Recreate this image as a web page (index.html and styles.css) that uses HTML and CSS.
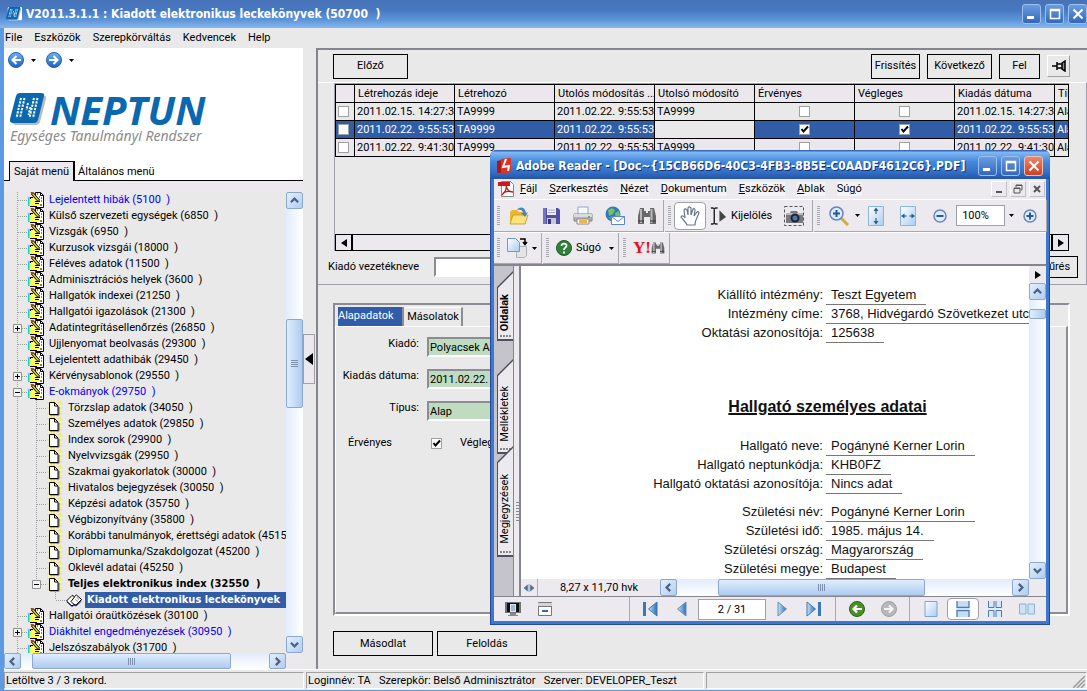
FILE: index.html
```html
<!DOCTYPE html>
<html lang="hu">
<head>
<meta charset="utf-8">
<title>Kiadott elektronikus leckekönyvek</title>
<link rel="stylesheet" href="styles.css">
</head>
<body>
<svg class="defs" aria-hidden="true">
  <defs>
    <linearGradient id="blueBall" x1="0" y1="0" x2="0" y2="1"><stop offset="0" stop-color="#6fb0f2"/><stop offset="1" stop-color="#1b62c4"/></linearGradient>
    <linearGradient id="paper" x1="0" y1="0" x2="1" y2="1"><stop offset="0" stop-color="#ffffff"/><stop offset="1" stop-color="#a9cdf2"/></linearGradient>
    <linearGradient id="navBlue" x1="0" y1="0" x2="1" y2="0"><stop offset="0" stop-color="#c8e4f8"/><stop offset="1" stop-color="#2e6cb0"/></linearGradient>
  </defs>
  <symbol id="mid" viewBox="0 0 24 16"><path d="M13.5 0V16M14 8.500H24" fill="none" stroke="#a0a0a0" stroke-dasharray="1 1"/></symbol>
  <symbol id="last" viewBox="0 0 24 16"><path d="M13.5 0V8M14 8.500H24" fill="none" stroke="#a0a0a0" stroke-dasharray="1 1"/></symbol>
  <symbol id="plus" viewBox="0 0 24 16"><path d="M13.5 0V16M18 8.500H24" fill="none" stroke="#a0a0a0" stroke-dasharray="1 1"/><path d="M9.500 4.500h8v8h-8z" fill="#f4f4f4" stroke="#909090"/><path d="M11 8.500h5M13.500 6v5" stroke="#000"/></symbol>
  <symbol id="minus" viewBox="0 0 24 16"><path d="M13.500 0V16M18 8.500H24" fill="none" stroke="#a0a0a0" stroke-dasharray="1 1"/><path d="M9.500 4.500h8v8h-8z" fill="#f4f4f4" stroke="#909090"/><path d="M11 8.500h5" stroke="#000"/></symbol>
  <symbol id="minusend" viewBox="0 0 24 16"><path d="M13.500 0V4M18 8.500H24" fill="none" stroke="#a0a0a0" stroke-dasharray="1 1"/><path d="M9.500 4.500h8v8h-8z" fill="#f4f4f4" stroke="#909090"/><path d="M11 8.500h5" stroke="#000"/></symbol>
  <symbol id="hand" viewBox="0 0 16 16">
    <path d="M7.500.5h5l3 3v12h-8z" fill="#fff" stroke="#000"/><path d="M12.500.5v3h3" fill="none" stroke="#000"/>
    <path d="M2 6h4l5 1v3l1 2-2 2-8 1z" fill="#ffff60"/><path d="M0 5h1.500v9H0z" fill="#00d8e0"/>
    <path d="M2 5.500h3M7 9.500h5M7 11.500h4M2 14.500h7M2.500 5v2" stroke="#000" fill="none"/>
    <path d="M4 1l7 8" stroke="#000" stroke-width="3"/><path d="M4.500 1.500l6 7" stroke="#f8e800" stroke-width="1.200"/><path d="M3 0l1.500 1.500" stroke="#d02020" stroke-width="1.500"/>
    <path d="M13 6h1M13 9h1M12 13h2M9 2h1M11 5h1" stroke="#000"/>
  </symbol>
  <symbol id="doc" viewBox="0 0 16 16">
    <path d="M0 2l3 2M4 0l1 2M14 1l-3 3M0 8h2M15 8h-3M0 14l3-2M15 14l-3-2M13 4l2 0M7 0v2" stroke="#ffee20" stroke-width="1.500"/>
    <path d="M2.500 2.500h5l3.500 3.500v8.500H2.500z" fill="#fff" stroke="#000"/><path d="M7.500 2.500v3.500H11" fill="none" stroke="#000"/>
    <path d="M3 15h9V7" fill="none" stroke="#000" stroke-width=".6"/>
  </symbol>
  <symbol id="book" viewBox="0 0 16 16"><path d="M.5 9L6 3.500l2.500 1 2-1.500 5 4.500L10 13l-2.500-.5L6 14z" fill="#fff" stroke="#000"/><path d="M1 10l5 4.500L8 13l2 1 5.500-5" fill="none" stroke="#1818b0"/><path d="M8.500 5L5 9.500l3 3" fill="none" stroke="#000"/><path d="M10.500 5.500l2.500 2M9.500 7.500l2.500 2" stroke="#888"/></symbol>
  <symbol id="up" viewBox="0 0 8 8"><path d="M.8 5.500L4 2.300l3.200 3.200" fill="none" stroke="#4d6185" stroke-width="2"/></symbol>
  <symbol id="down" viewBox="0 0 8 8"><path d="M.8 2.500L4 5.700l3.200-3.200" fill="none" stroke="#4d6185" stroke-width="2"/></symbol>
  <symbol id="lt" viewBox="0 0 8 8"><path d="M5.500.8L2.300 4l3.200 3.200" fill="none" stroke="#4d6185" stroke-width="2"/></symbol>
  <symbol id="rt" viewBox="0 0 8 8"><path d="M2.500.8L5.700 4 2.500 7.200" fill="none" stroke="#4d6185" stroke-width="2"/></symbol>
  <symbol id="caret" viewBox="0 0 5 3"><path d="M0 0h5L2.500 3z" fill="#000"/></symbol>
  <symbol id="wmin" viewBox="0 0 12 12"><path d="M1 8h7v3H1z" fill="#fff"/></symbol>
  <symbol id="wmax" viewBox="0 0 12 12"><path d="M1.500 1.500h9v9h-9zM1 2.500h10" fill="none" stroke="#fff" stroke-width="1.500"/></symbol>
  <symbol id="wx" viewBox="0 0 12 12"><path d="M1.500 1.500l9 9m0-9l-9 9" stroke="#fff" stroke-width="2"/></symbol>
  <symbol id="nlogo" viewBox="0 0 36 32">
    <path d="M9 3h26q2 1 1 3l-6 23q-1 3-4 3H5l-3-2z" fill="#b9bcc0"/>
    <path d="M10 0h21q4 0 3 3l-6 24q-1 3-4 3H3q-4 0-3-4L6 3q1-3 4-3z" fill="#0a68b0"/>
    <path d="M11 5l-4.500 20M14.500 5l-4.500 20M18 10l-1.500 7M20.500 14l-2 8M24 5l-4.500 20M27.500 5l-4.500 20" stroke="#fff" stroke-width="2" stroke-dasharray="2.200 1.200"/>
  </symbol>
  <symbol id="binoc" viewBox="0 0 20 20"><path d="M3 2h4v3h2v2h2V5h2V2h4l2 8v8h-6v-7H7v7H1v-8z" fill="#686868"/><path d="M4 3v14M14.500 3v14" stroke="#b8b8b8" stroke-width="2"/><path d="M1 15h6M13 15h6" stroke="#333"/></symbol>
</svg>

<div class="app">
  <header class="titlebar">
    <svg class="i16" viewBox="0 0 36 32"><rect x="4" width="32" height="30" rx="3" fill="#fff"/><use href="#nlogo" width="34" height="30"/></svg>
    <h1>V2011.3.1.1 : Kiadott elektronikus leckekönyvek (50700 &nbsp;)</h1>
    <div class="winbtns">
      <button aria-label="Kis méret"><svg><use href="#wmin"/></svg></button>
      <button aria-label="Teljes méret"><svg><use href="#wmax"/></svg></button>
      <button aria-label="Bezárás"><svg><use href="#wx"/></svg></button>
    </div>
  </header>

  <nav class="menubar">
    <button>File</button><button>Eszközök</button><button>Szerepkörváltás</button><button>Kedvencek</button><button>Help</button>
  </nav>

  <main class="main">
    <aside class="sidebar">
      <div class="brand">
        <div class="history">
          <button aria-label="Vissza"><svg class="i16" viewBox="0 0 16 16"><circle cx="8" cy="8" r="7.500" fill="url(#blueBall)" stroke="#2060b8"/><path d="M13 8H5M8.500 4L4.500 8l4 4" fill="none" stroke="#fff" stroke-width="2"/></svg></button>
          <svg class="caret"><use href="#caret"/></svg>
          <button aria-label="Előre"><svg class="i16" viewBox="0 0 16 16"><circle cx="8" cy="8" r="7.500" fill="url(#blueBall)" stroke="#2060b8"/><path d="M3 8h8M7.500 4l4 4-4 4" fill="none" stroke="#fff" stroke-width="2"/></svg></button>
          <svg class="caret"><use href="#caret"/></svg>
        </div>
        <div class="logo"><svg class="logo-mark"><use href="#nlogo"/></svg><span>NEPTUN</span></div>
        <p class="tagline">Egységes Tanulmányi Rendszer</p>
        <div class="sidetabs"><button class="on">Saját menü</button><button>Általános menü</button></div>
      </div>
      <div class="treebox">
        <ul class="tree">
          <li><div class="node blue"><svg class="br"><use href="#mid"/></svg><svg class="i16"><use href="#hand"/></svg><span>Lejelentett hibák (5100 &nbsp;)</span></div></li>
          <li><div class="node"><svg class="br"><use href="#mid"/></svg><svg class="i16"><use href="#hand"/></svg><span>Külső szervezeti egységek (6850 &nbsp;)</span></div></li>
          <li><div class="node"><svg class="br"><use href="#mid"/></svg><svg class="i16"><use href="#hand"/></svg><span>Vizsgák (6950 &nbsp;)</span></div></li>
          <li><div class="node"><svg class="br"><use href="#mid"/></svg><svg class="i16"><use href="#hand"/></svg><span>Kurzusok vizsgái (18000 &nbsp;)</span></div></li>
          <li><div class="node"><svg class="br"><use href="#mid"/></svg><svg class="i16"><use href="#hand"/></svg><span>Féléves adatok (11500 &nbsp;)</span></div></li>
          <li><div class="node"><svg class="br"><use href="#mid"/></svg><svg class="i16"><use href="#hand"/></svg><span>Adminisztrációs helyek (3600 &nbsp;)</span></div></li>
          <li><div class="node"><svg class="br"><use href="#mid"/></svg><svg class="i16"><use href="#hand"/></svg><span>Hallgatók indexei (21250 &nbsp;)</span></div></li>
          <li><div class="node"><svg class="br"><use href="#mid"/></svg><svg class="i16"><use href="#hand"/></svg><span>Hallgatói igazolások (21300 &nbsp;)</span></div></li>
          <li><div class="node"><svg class="br"><use href="#plus"/></svg><svg class="i16"><use href="#hand"/></svg><span>Adatintegrításellenőrzés (26850 &nbsp;)</span></div></li>
          <li><div class="node"><svg class="br"><use href="#mid"/></svg><svg class="i16"><use href="#hand"/></svg><span>Ujjlenyomat beolvasás (29300 &nbsp;)</span></div></li>
          <li><div class="node"><svg class="br"><use href="#mid"/></svg><svg class="i16"><use href="#hand"/></svg><span>Lejelentett adathibák (29450 &nbsp;)</span></div></li>
          <li><div class="node"><svg class="br"><use href="#plus"/></svg><svg class="i16"><use href="#hand"/></svg><span>Kérvénysablonok (29550 &nbsp;)</span></div></li>
          <li><div class="node blue"><svg class="br"><use href="#minus"/></svg><svg class="i16"><use href="#hand"/></svg><span>E-okmányok (29750 &nbsp;)</span></div>
            <ul class="lined">
              <li><div class="node"><svg class="br"><use href="#mid"/></svg><svg class="i16"><use href="#doc"/></svg><span>Törzslap adatok (34050 &nbsp;)</span></div></li>
              <li><div class="node"><svg class="br"><use href="#mid"/></svg><svg class="i16"><use href="#doc"/></svg><span>Személyes adatok (29850 &nbsp;)</span></div></li>
              <li><div class="node"><svg class="br"><use href="#mid"/></svg><svg class="i16"><use href="#doc"/></svg><span>Index sorok (29900 &nbsp;)</span></div></li>
              <li><div class="node"><svg class="br"><use href="#mid"/></svg><svg class="i16"><use href="#doc"/></svg><span>Nyelvvizsgák (29950 &nbsp;)</span></div></li>
              <li><div class="node"><svg class="br"><use href="#mid"/></svg><svg class="i16"><use href="#doc"/></svg><span>Szakmai gyakorlatok (30000 &nbsp;)</span></div></li>
              <li><div class="node"><svg class="br"><use href="#mid"/></svg><svg class="i16"><use href="#doc"/></svg><span>Hivatalos bejegyzések (30050 &nbsp;)</span></div></li>
              <li><div class="node"><svg class="br"><use href="#mid"/></svg><svg class="i16"><use href="#doc"/></svg><span>Képzési adatok (35750 &nbsp;)</span></div></li>
              <li><div class="node"><svg class="br"><use href="#mid"/></svg><svg class="i16"><use href="#doc"/></svg><span>Végbizonyítvány (35800 &nbsp;)</span></div></li>
              <li><div class="node"><svg class="br"><use href="#mid"/></svg><svg class="i16"><use href="#doc"/></svg><span>Korábbi tanulmányok, érettségi adatok (45150</span></div></li>
              <li><div class="node"><svg class="br"><use href="#mid"/></svg><svg class="i16"><use href="#doc"/></svg><span>Diplomamunka/Szakdolgozat (45200 &nbsp;)</span></div></li>
              <li><div class="node"><svg class="br"><use href="#mid"/></svg><svg class="i16"><use href="#doc"/></svg><span>Oklevél adatai (45250 &nbsp;)</span></div></li>
              <li><div class="node strong"><svg class="br"><use href="#minusend"/></svg><svg class="i16"><use href="#doc"/></svg><span>Teljes elektronikus index (32550 &nbsp;)</span></div>
                <ul>
                  <li><div class="node strong picked"><svg class="br"><use href="#last"/></svg><svg class="i16"><use href="#book"/></svg><span>Kiadott elektronikus leckekönyvek</span></div></li>
                </ul>
              </li>
            </ul>
          </li>
          <li><div class="node"><svg class="br"><use href="#mid"/></svg><svg class="i16"><use href="#hand"/></svg><span>Hallgatói óraütközések (30100 &nbsp;)</span></div></li>
          <li><div class="node blue"><svg class="br"><use href="#plus"/></svg><svg class="i16"><use href="#hand"/></svg><span>Diákhitel engedményezések (30950 &nbsp;)</span></div></li>
          <li><div class="node"><svg class="br"><use href="#mid"/></svg><svg class="i16"><use href="#hand"/></svg><span>Jelszószabályok (31700 &nbsp;)</span></div></li>
        </ul>
        <div class="vscroll">
          <button class="sb" aria-label="Fel"><svg><use href="#up"/></svg></button>
          <i class="g111"></i><div class="thumb g88"><b class="ridges"></b></div><i class="g231"></i>
          <button class="sb" aria-label="Le"><svg><use href="#down"/></svg></button>
        </div>
        <div class="hscroll">
          <button class="sb" aria-label="Balra"><svg><use href="#lt"/></svg></button>
          <i class="g11"></i><div class="thumb g200"><b class="ridges side"></b></div><i class="g39"></i>
          <button class="sb" aria-label="Jobbra"><svg><use href="#rt"/></svg></button>
        </div>
      </div>
    </aside>

    <div class="splitter"><button aria-label="Panel elrejtése"><svg viewBox="0 0 8 12"><path d="M0 6l8-6v12z"/></svg></button></div>

    <section class="content">
      <div class="upper">
        <div class="actions">
          <button class="btn w75">Előző</button>
          <span class="grow"></span>
          <button class="btn w49">Frissítés</button>
          <button class="btn w65">Következő</button>
          <button class="btn w41">Fel</button>
          <button class="pin" aria-label="Rögzítés"><svg viewBox="0 0 16 12"><path d="M1 6h5M6 2v8M6 4h5M6 8h5M11 3l3-2v10l-3-2z" fill="#888" stroke="#000" stroke-width="1.500"/></svg></button>
        </div>
        <div class="gridwrap">
          <div class="gridbox">
            <table class="grid">
              <colgroup><col class="c19"><col class="c100"><col class="c100"><col class="c100"><col class="c100"><col class="c100"><col class="c100"><col class="c100"><col></colgroup>
              <thead><tr><th></th><th>Létrehozás ideje</th><th>Létrehozó</th><th>Utolós módosítás ...</th><th>Utolsó módosító</th><th>Érvényes</th><th>Végleges</th><th>Kiadás dátuma</th><th>Típus</th></tr></thead>
              <tbody>
                <tr><td><input type="checkbox" aria-label="Sor"></td><td>2011.02.15. 14:27:39</td><td>TA9999</td><td>2011.02.22. 9:55:53</td><td>TA9999</td><td class="ck"><input type="checkbox" aria-label="Érvényes"></td><td class="ck"><input type="checkbox" aria-label="Végleges"></td><td>2011.02.15. 14:27:39</td><td>Alap</td></tr>
                <tr class="sel"><td><input type="checkbox" aria-label="Sor"></td><td>2011.02.22. 9:55:53</td><td>TA9999</td><td>2011.02.22. 9:55:53</td><td class="plain"></td><td class="ck"><input type="checkbox" checked aria-label="Érvényes"></td><td class="ck"><input type="checkbox" checked aria-label="Végleges"></td><td>2011.02.22. 9:55:53</td><td>Alap</td></tr>
                <tr class="alt"><td><input type="checkbox" aria-label="Sor"></td><td>2011.02.22. 9:41:30</td><td>TA9999</td><td>2011.02.22. 9:55:53</td><td>TA9999</td><td class="ck"><input type="checkbox" aria-label="Érvényes"></td><td class="ck"><input type="checkbox" aria-label="Végleges"></td><td>2011.02.22. 9:41:30</td><td>Alap</td></tr>
              </tbody>
            </table>
            <div class="flatscroll">
              <button aria-label="Balra"><svg viewBox="0 0 6 8"><path d="M6 0v8L0 4z"/></svg></button>
              <button aria-label="Jobbra"><svg viewBox="0 0 6 8"><path d="M0 0v8l6-4z"/></svg></button>
            </div>
          </div>
          <div class="filter">
            <label for="vez">Kiadó vezetékneve</label><input id="vez" type="text"><span class="grow"></span><button class="btn w49">Szűrés</button>
          </div>
        </div>
      </div>

      <div class="panel">
        <div class="tabs"><button class="on">Alapadatok</button><button>Másolatok</button></div>
        <form class="form">
          <label for="kiado">Kiadó:</label><input id="kiado" type="text" value="Polyacsek András">
          <label for="datum">Kiadás dátuma:</label><input id="datum" type="text" value="2011.02.22.">
          <label for="tipus">Típus:</label><input id="tipus" type="text" value="Alap">
          <div class="flags"><label for="erv">Érvényes</label><input id="erv" type="checkbox" checked><label for="veg">Végleges</label><input id="veg" type="checkbox" checked></div>
        </form>
      </div>

      <div class="footerbtns"><button class="btn w100">Másodlat</button><button class="btn w100">Feloldás</button></div>
    </section>
  </main>

  <footer class="status">
    <span class="s1">Letöltve 3 / 3 rekord.</span>
    <span class="s2">Loginnév: TA &nbsp; Szerepkör: Belső Adminisztrátor &nbsp; Szerver: DEVELOPER_Teszt</span>
    <span class="s3"><svg viewBox="0 0 12 12"><path d="M0 12L12 0M4 12l8-8M8 12l4-4" stroke="#999" stroke-width="1.500"/></svg></span>
  </footer>
</div>

<section class="reader">
  <header class="rtitle">
    <svg class="i16" viewBox="0 0 16 16"><path d="M1 3l5-1v13H1z" fill="#b81414"/><path d="M5 1l10-1v14L5 16z" fill="#e03020"/><path d="M10 1L7 9l6-1-1 5" stroke="#fff" stroke-width="2" fill="none"/></svg>
    <h2>Adobe Reader - [Doc~{15CB66D6-40C3-4FB3-8B5E-C0AADF4612C6}.PDF]</h2>
    <div class="winbtns">
      <button aria-label="Kis méret"><svg><use href="#wmin"/></svg></button>
      <button aria-label="Teljes méret"><svg><use href="#wmax"/></svg></button>
      <button class="red" aria-label="Bezárás"><svg><use href="#wx"/></svg></button>
    </div>
  </header>
  <nav class="rmenu">
    <svg class="i16" viewBox="0 0 16 16"><path d="M3.500.5h9l3 3v12h-12z" fill="#fff" stroke="#888"/><path d="M0 1h12v4H0z" fill="#d01818"/><path d="M8 5c1 3-1 6-4 9M8 5c1 4 3 6 7 6M5 12c3-2 6-2 9-1" stroke="#c01818" stroke-width="1.300" fill="none"/></svg>
    <button><u>F</u>ájl</button><button><u>S</u>zerkesztés</button><button><u>N</u>ézet</button><button><u>D</u>okumentum</button><button><u>E</u>szközök</button><button><u>A</u>blak</button><button>Sú<u>g</u>ó</button>
    <span class="grow"></span>
    <div class="mdi">
      <button aria-label="Kis méret"><svg viewBox="0 0 10 10"><path d="M2 8h6" stroke="#555" stroke-width="2"/></svg></button>
      <button aria-label="Előző méret"><svg viewBox="0 0 10 10"><path d="M3 3V1h6v5H8M1 4h6v5H1zM1 4.500h6M3 1.500h6" fill="none" stroke="#555"/></svg></button>
      <button aria-label="Bezárás"><svg viewBox="0 0 10 10"><path d="M2 2l6 6m0-6L2 8" stroke="#555" stroke-width="2"/></svg></button>
    </div>
  </nav>

  <div class="tools">
    <div class="group">
      <i class="grip"></i>
      <button class="tb" aria-label="Megnyitás"><svg viewBox="0 0 20 20"><path d="M1 6l2-2h5l2 2h7v12H1z" fill="#e8b830"/><path d="M1 18l3-9h15l-3 9z" fill="#fbe27a" stroke="#c89820" stroke-width=".8"/><path d="M8 4c3-4 8-3 9 3l2-1-3 5-4-4h2c0-3-3-4-6-3z" fill="#4a82c8"/></svg></button>
      <button class="tb" aria-label="Mentés"><svg viewBox="0 0 20 20"><path d="M2 2h15l2 2v14H2z" fill="#5050a8"/><path d="M2 2h3v16H2z" fill="#7474c8"/><path d="M6 2h9v7H6z" fill="#eef"/><path d="M7 4h7M7 6.500h7" stroke="#a8a8cc"/><path d="M6 12h9v6H6z" fill="#c8c8d8"/><path d="M7 13h3v5H7z" fill="#383878"/></svg></button>
      <button class="tb" aria-label="Nyomtatás"><svg viewBox="0 0 20 20"><path d="M5 1h10v8H5z" fill="#f4f8ff" stroke="#90a8c8"/><path d="M1 8h18v7H1z" fill="#b4b4ba" stroke="#808088"/><path d="M1 8h18v3H1z" fill="#dcdce0"/><path d="M4 13h12v5H4z" fill="#fff" stroke="#888"/><path d="M6 14h8v3H6z" fill="#f0b840"/><circle cx="16" cy="11" r="1" fill="#4a4"/></svg></button>
      <button class="tb" aria-label="E-mail"><svg viewBox="0 0 20 20"><circle cx="8" cy="8" r="7.500" fill="#2e78c8"/><path d="M3 4l4-2 3 2-2 4-4 2zM10 7l4-2 1 4-4 4zM3 11l4 1 1 3z" fill="#78c058"/><path d="M6.500 10.500h13v8h-13z" fill="#fff" stroke="#5888c8"/><path d="M6.500 10.500l6.500 5 6.500-5" fill="none" stroke="#5888c8"/></svg></button>
      <button class="tb" aria-label="Keresés"><svg><use href="#binoc"/></svg></button>
    </div>
    <div class="group">
      <i class="grip"></i>
      <button class="tb pressed" aria-label="Kéz eszköz"><svg viewBox="0 0 20 20"><path d="M7 19c-1-3-4-5-6-8 1-2 3-1 4 1L4 4c1-2 2-1 3 0l1 5V2c1-2 2-1 3 0v7l2-6c1-1 2 0 2 1l-1 6 3-4c1-1 2 0 2 1l-3 7c-1 2-1 3-1 5z" fill="#fff" stroke="#68788c" stroke-width="1.200"/></svg></button>
      <button class="tool"><svg class="seltool" viewBox="0 0 18 18"><path d="M1 .5h2l1.500 1L6 .5h2M4.500 1v16M1 17.500h2l1.500-1 1.500 1h2" fill="none" stroke="#222" stroke-width="1.500"/><path d="M10 3l7 7-7 5z" fill="#444"/></svg>Kijelölés</button>
      <button class="tb cam" aria-label="Pillanatkép"><svg viewBox="0 0 20 20"><path d="M.5.5h19v19H.5z" fill="none" stroke="#555" stroke-dasharray="3 2"/><path d="M2 7h4l1-2h6l1 2h5v10H2z" fill="#767a80"/><path d="M2 7h17v2H2z" fill="#b4b8bc"/><circle cx="11" cy="12" r="4.500" fill="#223"/><circle cx="11" cy="12" r="2.500" fill="#4a78a8"/></svg></button>
    </div>
    <div class="group last">
      <i class="grip"></i>
      <button class="tb" aria-label="Nagyítás eszköz"><svg viewBox="0 0 20 20"><path d="M12 12l7 7" stroke="#d8a838" stroke-width="3"/><circle cx="7.500" cy="7.500" r="6.500" fill="#dcecfc" stroke="#6a86b8" stroke-width="1.500"/><path d="M4 7.500h7M7.500 4v7" stroke="#2458a0" stroke-width="2"/></svg></button>
      <svg class="caret"><use href="#caret"/></svg>
      <button class="tb" aria-label="Teljes oldal"><svg viewBox="0 0 20 20"><path d="M2.500.5h15v19h-15z" fill="url(#paper)" stroke="#8cb4e0"/><path d="M10 8V4M10 12v4" stroke="#246"/><path d="M7.500 5L10 1.500 12.500 5zM7.500 15l2.500 3.500 2.500-3.500z" fill="#246090"/></svg></button>
      <button class="tb" aria-label="Oldalszélesség"><svg viewBox="0 0 20 20"><path d="M2.500.5h15v19h-15z" fill="url(#paper)" stroke="#8cb4e0"/><path d="M8.500 10H5M11.500 10H15" stroke="#246"/><path d="M6.500 7.500L3 10l3.500 2.500zM13.500 7.500L17 10l-3.500 2.500z" fill="#246090"/></svg></button>
      <button class="tb" aria-label="Kicsinyítés"><svg viewBox="0 0 20 20"><circle cx="10" cy="10" r="6" fill="#dcecfc" stroke="#6a86b8" stroke-width="1.500"/><path d="M6.500 10h7" stroke="#2458a0" stroke-width="2"/></svg></button>
      <input class="zoom" type="text" value="100%" aria-label="Nagyítás">
      <svg class="caret"><use href="#caret"/></svg>
      <button class="tb" aria-label="Nagyítás"><svg viewBox="0 0 20 20"><circle cx="10" cy="10" r="6" fill="#dcecfc" stroke="#6a86b8" stroke-width="1.500"/><path d="M6.500 10h7M10 6.500v7" stroke="#2458a0" stroke-width="2"/></svg></button>
    </div>
  </div>
  <div class="tools second">
    <div class="group">
      <i class="grip"></i>
      <button class="tool"><svg class="wide" viewBox="0 0 21 20"><path d="M9.500 8.500h10v9l-2 2h-8z" fill="#e4e4e4" stroke="#b0b0b0"/><path d="M.5.500h8l4 4v9H.5z" fill="url(#paper)" stroke="#7098d0"/><path d="M13 1h5v5M16 4l2 2.500L20 4" fill="none" stroke="#000" stroke-width="1.500"/></svg><svg class="caret"><use href="#caret"/></svg></button>
    </div>
    <div class="group">
      <i class="grip"></i>
      <button class="tool help"><svg class="i16" viewBox="0 0 16 16"><circle cx="8" cy="8" r="7.500" fill="#2f8038" stroke="#1c5c28"/><path d="M5.500 6c0-3.500 5.500-3 5 0-.3 1.500-2.500 1.500-2.500 4M8 11.500v2" fill="none" stroke="#fff" stroke-width="1.800"/></svg>Súgó<svg class="caret"><use href="#caret"/></svg></button>
    </div>
    <div class="group">
      <i class="grip"></i>
      <button class="tool yahoo"><b>Y!</b><svg class="i14"><use href="#binoc"/></svg></button>
    </div>
  </div>

  <div class="rbody">
    <div class="rtabs">
      <button class="t1"><span>Oldalak</span></button>
      <button class="t2"><span>Mellékletek</span></button>
      <button class="t3"><span>Megjegyzések</span></button>
    </div>
    <div class="rsplit"></div>
    <div class="view">
      <div class="page">
        <article class="sheet">
          <div class="f"><span>Kiállító intézmény:</span><b>Teszt Egyetem</b></div>
          <div class="f"><span>Intézmény címe:</span><b>3768, Hidvégardó Szövetkezet utca</b></div>
          <div class="f"><span>Oktatási azonosítója:</span><b>125638</b></div>
          <h3>Hallgató személyes adatai</h3>
          <div class="f"><span>Hallgató neve:</span><b>Pogányné Kerner Lorin</b></div>
          <div class="f"><span>Hallgató neptunkódja:</span><b>KHB0FZ</b></div>
          <div class="f"><span>Hallgató oktatási azonosítója:</span><b>Nincs adat</b></div>
          <div class="f gap"><span>Születési név:</span><b>Pogányné Kerner Lorin</b></div>
          <div class="f"><span>Születési idő:</span><b>1985. május 14.</b></div>
          <div class="f"><span>Születési ország:</span><b>Magyarország</b></div>
          <div class="f"><span>Születési megye:</span><b>Budapest</b></div>
        </article>
      </div>
      <div class="vscroll">
        <button class="flyout" aria-label="Menü"><svg viewBox="0 0 6 8"><path d="M0 0v8l6-4z"/></svg></button>
        <button class="sb" aria-label="Fel"><svg><use href="#up"/></svg></button>
        <i class="g9"></i><div class="thumb g8"></div><i class="g246"></i>
        <button class="sb" aria-label="Le"><svg><use href="#down"/></svg></button>
      </div>
      <div class="viewfoot">
        <button class="sizer" aria-label="Méretezés"><svg viewBox="0 0 10 8"><path d="M5 0v8M3.500 1v6L0 4zM6.500 1v6L10 4z" fill="#46709c" stroke="#46709c" stroke-width=".6"/></svg></button>
        <span class="dims">8,27 x 11,70 hvk</span>
        <div class="hscroll">
          <button class="sb" aria-label="Balra"><svg><use href="#lt"/></svg></button>
          <i class="g41"></i><div class="thumb g208"><b class="ridges side"></b></div><i class="g88"></i>
          <button class="sb" aria-label="Jobbra"><svg><use href="#rt"/></svg></button>
        </div>
      </div>
    </div>
  </div>

  <div class="rbar">
    <div class="seg seg1">
      <button class="nb" aria-label="Teljes képernyő"><svg viewBox="0 0 16 16"><path d="M0 1h16v11H0z" fill="#707478"/><path d="M2 2h12v9H2z" fill="#111"/><path d="M5 3h6v8H5z" fill="#d8e8f8"/><path d="M6 5h4M6 7h4M6 9h4" stroke="#789"/><path d="M5 12h6v2H5zM3 14h10v1H3z" fill="#888"/></svg></button>
      <button class="nb" aria-label="Eszköztárak"><svg viewBox="0 0 16 16"><path d="M1.500 1.500h13v13h-13z" fill="#fff" stroke="#777"/><path d="M1 2h14v3H1z" fill="#d4d4d8"/><path d="M1 5.500h14" stroke="#777"/><path d="M5 10h6" stroke="#3468a8" stroke-width="2"/></svg></button>
    </div>
    <div class="seg seg2">
      <button class="nb" aria-label="Első oldal"><svg viewBox="0 0 16 16"><path d="M1 1h3v14H1z" fill="#3c78b8"/><path d="M15 1v14L6.500 8z" fill="url(#navBlue)" stroke="#3c78b8"/></svg></button>
      <button class="nb" aria-label="Előző oldal"><svg viewBox="0 0 16 16"><path d="M12 1v14L3.500 8z" fill="url(#navBlue)" stroke="#5c90c4"/></svg></button>
      <input type="text" value="2 / 31" aria-label="Oldal">
      <button class="nb" aria-label="Következő oldal"><svg viewBox="0 0 16 16"><path d="M4 1v14L12.500 8z" fill="url(#navBlue)" stroke="#5c90c4"/></svg></button>
      <button class="nb" aria-label="Utolsó oldal"><svg viewBox="0 0 16 16"><path d="M12 1h3v14h-3z" fill="#3c78b8"/><path d="M1 1v14L9.500 8z" fill="url(#navBlue)" stroke="#3c78b8"/></svg></button>
    </div>
    <div class="seg seg3">
      <button class="nb" aria-label="Előző nézet"><svg viewBox="0 0 16 16"><circle cx="8" cy="8" r="7.500" fill="#4a9028" stroke="#2c6410"/><path d="M13 8H5M8 4.500L4.500 8 8 11.500" fill="none" stroke="#fff" stroke-width="2.200"/></svg></button>
      <button class="nb" aria-label="Következő nézet"><svg viewBox="0 0 16 16"><circle cx="8" cy="8" r="7.500" fill="#b8b8b8" stroke="#a0a0a0"/><path d="M3 8h8M8 4.500L11.500 8 8 11.500" fill="none" stroke="#f4f4f4" stroke-width="2.200"/></svg></button>
    </div>
    <div class="seg seg4">
      <button class="nb" aria-label="Egy oldal"><svg viewBox="0 0 16 16"><path d="M2 .5h12v15H2z" fill="url(#paper)" stroke="#7ca4cc"/></svg></button>
      <button class="nb pressed" aria-label="Folyamatos"><svg viewBox="0 0 16 16"><path d="M2 0h12v6.500H2zM2 9h12v7H2z" fill="#c4dcf4"/><path d="M2 0v6.500h12V0M2 16V9.500h12V16" fill="none" stroke="#4a7cb4" stroke-width="1.300"/></svg></button>
      <button class="nb" aria-label="Folyamatos páros"><svg viewBox="0 0 16 16"><path d="M1.500 0v6.500H7V0M9 0v6.500h5.500V0M1.500 16V9.500H7V16M9 16V9.500h5.500V16" fill="#d8e8f8" stroke="#4a7cb4"/></svg></button>
      <button class="nb" aria-label="Páros oldal"><svg viewBox="0 0 16 16"><path d="M.5 3h6.500v10H.5zM9 3h6.500v10H9z" fill="#cce4f4" stroke="#8cb0d0"/></svg></button>
    </div>
  </div>
</section>
</body>
</html>
```
FILE: styles.css
```css
* { box-sizing: border-box; }
body {
  margin: 0;
  font: 11px/16px Roboto, "Liberation Sans", Arial, sans-serif;
  color: #000;
  background: #e9e9e9;
  overflow: hidden;
}
button, input { font: inherit; color: inherit; margin: 0; }
button { padding: 0; border: 0; background: none; white-space: nowrap; }
svg { display: block; flex: none; }
ul { list-style: none; margin: 0; padding: 0; }
h1, h2, h3, p { margin: 0; }
.defs { position: absolute; width: 0; height: 0; }
.i16 { width: 16px; height: 16px; }
.i14 { width: 14px; height: 14px; }
.grow { flex: 1; }
.caret { width: 5px; height: 3px; }

.app {
  display: flex;
  flex-direction: column;
  height: 100vh;
  border-left: 4px solid #5c9ae4;
  border-bottom: 1px solid #5c9ae4;
}
.titlebar {
  flex: none;
  display: flex;
  align-items: center;
  gap: 4px;
  height: 28px;
  margin-left: -4px;
  padding: 0 0 0 6px;
  background: linear-gradient(#4872b8 0%, #4678c0 35%, #5c94d8 70%, #86b8f0 100%);
  color: #fff;
}
.titlebar h1 { flex: 1; font: bold 12px/16px "DejaVu Sans Condensed", "DejaVu Sans", sans-serif; white-space: nowrap; }
.winbtns { display: flex; gap: 4px; }
.winbtns button {
  width: 19px;
  height: 20px;
  display: grid;
  place-items: center;
  border: 1px solid #9cc0f0;
  border-radius: 3px;
  background: linear-gradient(#6a9ce0, #3468b8);
}
.winbtns svg { width: 12px; height: 12px; }
.winbtns .red { background: linear-gradient(#e88870, #d04020); border-color: #f0c0b0; }

.menubar { flex: none; display: flex; gap: 12px; height: 20px; padding-left: 1px; align-items: center; background: #e9e9e9; }

.main { flex: 1; display: flex; min-height: 0; border-bottom: 1px solid #fff; }
.sidebar { flex: none; width: 299px; display: flex; flex-direction: column; min-height: 0; background: #ebe8ee; }
.brand { flex: none; background: #fff; }
.history { display: flex; align-items: center; gap: 7px; padding: 4px 4px 0; }
.history .caret { margin-right: 3px; }
.logo { display: flex; gap: 4px; align-items: flex-start; padding: 25px 6px 0; height: 60px; }
.logo-mark { width: 36px; height: 32px; }
.logo span { font: italic bold 40px/34px "Open Sans", sans-serif; color: #0a68b0; }
.tagline { padding: 0 6px; font: italic 14px/16px "Noto Sans", sans-serif; color: #8c8c8c; white-space: nowrap; }
.sidetabs { display: flex; align-items: flex-end; margin-top: 17px; padding-left: 5px; background: linear-gradient(#000, #000) 0 100% / 100% 1px no-repeat; }
.sidetabs button { height: 19px; padding: 0 4px; }
.sidetabs .on { height: 20px; border: 1px solid #000; border-bottom: 0; background: #ebe8ee; box-shadow: 1px 0 #000; }

.treebox {
  flex: 1;
  min-height: 0;
  display: grid;
  grid-template: minmax(0, 1fr) 16px / minmax(0, 1fr) 17px;
  margin-top: 11px;
}
.tree { overflow: hidden; background: #e9e9e9; }
.node { display: flex; height: 16px; align-items: center; white-space: nowrap; }
.node span { padding: 0 1px 0 4px; margin-left: 1px; }
.node .br { width: 24px; height: 16px; }
.tree ul { padding-left: 19px; }
.tree .lined { background: repeating-linear-gradient(#a0a0a0 0 1px, transparent 1px 2px) 13px 0 / 1px 100% no-repeat; }
.blue { color: #0000f0; }
.strong { font: bold 11px/16px "DejaVu Sans Condensed", "DejaVu Sans", sans-serif; }
.picked span { flex: 1; padding-left: 2px; margin-left: 3px; background: #315da8; color: #fff; }

.vscroll { display: flex; flex-direction: column; background: linear-gradient(90deg, #e2ecfc, #fff); }
.hscroll { display: flex; background: linear-gradient(#e2ecfc, #fff); }
.sb, .thumb { border: 1px solid #8ca8cc; border-radius: 2px; background: linear-gradient(135deg, #e4f0fe, #b0cdf0); }
.sb { flex: none; width: 17px; height: 17px; display: grid; place-items: center; }
.hscroll .sb { height: auto; }
.sb svg { width: 9px; height: 9px; }
.thumb { display: grid; place-items: center; }
.vscroll .thumb { background: linear-gradient(90deg, #e0eefe, #aecbf0); }
.hscroll .thumb { background: linear-gradient(#e0eefe, #aecbf0); }
.ridges { width: 7px; height: 7px; background: repeating-linear-gradient(#8090b0 0 1px, transparent 1px 2px); }
.ridges.side { background: repeating-linear-gradient(90deg, #8090b0 0 1px, transparent 1px 2px); }
.g8 { flex: 8 1 0; } .g9 { flex: 9 1 0; } .g11 { flex: 11 1 0; } .g39 { flex: 39 1 0; } .g41 { flex: 41 1 0; }
.g88 { flex: 88 1 0; } .g111 { flex: 111 1 0; } .g200 { flex: 200 1 0; } .g208 { flex: 208 1 0; } .g231 { flex: 231 1 0; } .g246 { flex: 246 1 0; }

.splitter { flex: none; width: 13px; display: flex; align-items: center; background: #e9e9e9; }
.splitter button { width: 12px; height: 50px; display: grid; place-items: center; border: 1px solid #a0a0a8; background: #ebe8ee; }
.splitter svg { width: 8px; height: 12px; }

.content { flex: 1; min-width: 0; display: flex; flex-direction: column; border-left: 2px solid #85858d; border-top: 2px solid #85858d; }
.upper { border-bottom: 1px solid #a0a0a8; }
.actions { display: flex; align-items: center; gap: 7px; height: 32px; padding: 0 17px 0 15px; }
.btn { height: 25px; padding: 0; border: 1px solid #000; background: #e9e9e9; }
.w41 { width: 41px; } .w49 { width: 49px; } .w65 { width: 65px; } .w75 { width: 75px; } .w100 { width: 100px; }
.pin { width: 23px; height: 22px; display: grid; place-items: center; border: 1px solid; border-color: #fff #a0a0a0 #a0a0a0 #fff; }
.pin svg { width: 16px; height: 12px; }
.gridwrap { border-top: 1px solid #fff; border-right: 1px solid #a0a0a8; padding: 0 8px 6px 0; }
.gridbox { display: flex; flex-direction: column; height: 168px; margin: 0 9px 0 16px; border-top: 1px solid #a0a0a8; border-left: 1px solid #a0a0a8; }
.grid { width: 100%; table-layout: fixed; border-collapse: collapse; }
.grid th, .grid td { height: 18px; padding: 0 2px; border: 1px solid #000; font-weight: normal; text-align: left; line-height: 16px; white-space: nowrap; overflow: hidden; }
.grid th { padding: 0 3px; background: #ebe7ed; }
.grid .alt td { background: #ebe7ed; }
.grid .sel td { background: #315da8; color: #fff; }
.grid .sel .plain { background: #e9e9e9; }
.grid .ck { text-align: center; }
.c19 { width: 19px; } .c100 { width: 100px; }
input[type="checkbox"] { appearance: none; width: 11px; height: 11px; border: 1px solid #a0a0a0; background: #fff; vertical-align: middle; }
input[type="checkbox"]:checked {
  background: #fff url('data:image/svg+xml,<svg xmlns="http://www.w3.org/2000/svg" viewBox="0 0 9 9"><path d="M1.500 4l2 2.500L8 1.500" fill="none" stroke="black" stroke-width="2"/></svg>') center / 9px 9px;
}
.flatscroll { display: flex; justify-content: space-between; height: 17px; margin-top: auto; border: 1px solid #000; background: #ebe8ee; }
.flatscroll button { width: 17px; display: grid; place-items: center; }
.flatscroll button:first-child { border-right: 2px solid #000; }
.flatscroll button:last-child { border-left: 2px solid #000; }
.flatscroll svg { width: 6px; height: 8px; }
.filter { display: flex; align-items: center; padding: 5px 0 0 10px; }
.filter label { width: 106px; }
.filter .btn { height: 22px; }
.filter input { width: 150px; height: 20px; border: 2px solid; border-color: #8c8c94 #fff #fff #8c8c94; background: #fff; }

.panel { flex: 1; min-height: 0; display: flex; flex-direction: column; margin: 18px 17px 15px 15px; border: 2px solid; border-color: #8c8c94 #fff #fff #8c8c94; }
.tabs { display: flex; gap: 1px; padding: 2px 3px 0; height: 21px; }
.tabs button { width: 58px; height: 19px; padding: 0; border-right: 2px solid #8c8c94; border-top: 1px solid #fff; }
.tabs .on { width: 66px; padding: 0 0 2px; text-align: left; background: #315da8; color: #fff; border-top: 0; }
.form {
  flex: 1;
  display: grid;
  grid-template-columns: 82px 200px;
  grid-auto-rows: 20px;
  gap: 12px 8px;
  padding: 10px 0 0 1px;
  border: 1px solid #fff;
  border-right: 2px solid #8c8c94;
  border-bottom: 2px solid #8c8c94;
}
.form > label { text-align: right; line-height: 14px; }
.form input[type="text"] { height: 20px; padding: 0 1px; border: 2px solid; border-color: #8c8c94 #fff #fff #8c8c94; background: #c0dcc0; }
.flags { grid-column: 1 / 3; display: flex; align-items: center; padding-left: 11px; }
.flags label:first-child { width: 83px; }
.flags input { margin: 0 18px 0 0; }
.footerbtns { display: flex; gap: 4px; padding: 0 0 13px 15px; }

.status { flex: none; display: flex; gap: 2px; height: 20px; padding: 2px 0 1px; }
.status span { border: 1px solid; border-color: #a0a0a0 #fff #fff #a0a0a0; padding: 0 1px; line-height: 16px; white-space: nowrap; overflow: hidden; }
.s1 { width: 300px; }
.s2 { width: 398px; }
.s3 { flex: 1; display: flex; justify-content: flex-end; align-items: flex-end; }
.s3 svg { width: 12px; height: 12px; }

.reader {
  position: absolute;
  left: 490px;
  top: 150px;
  width: 560px;
  height: 475px;
  display: flex;
  flex-direction: column;
  padding: 0 4px 4px;
  border-radius: 7px 7px 0 0;
  background: #3c78d0;
  box-shadow: inset 1px 0 #24489c, inset -1px -1px #24489c;
  overflow: hidden;
}
.rtitle {
  flex: none;
  display: flex;
  align-items: center;
  gap: 4px;
  height: 29px;
  margin: 0 -4px;
  padding: 3px 7px 0 6px;
  background: linear-gradient(#2450a8 0, #80b8f4 8%, #4488dc 40%, #3470c8 75%, #2454a8);
  color: #fff;
}
.rtitle h2 { flex: 1; font: bold 12px/16px "DejaVu Sans Condensed", "DejaVu Sans", sans-serif; text-shadow: 1px 1px #103070; white-space: nowrap; }
.rmenu { flex: none; display: flex; align-items: center; gap: 12px; height: 20px; padding: 0 1px 0 4px; background: #ece9ef; }
.rmenu > svg { margin-right: -6px; }
.rmenu > button { background: #f4f3f5; line-height: 14px; }
.mdi { display: flex; gap: 3px; }
.mdi button { width: 16px; height: 16px; display: grid; place-items: center; border: 1px solid; border-color: #fff #c0c0c8 #c0c0c8 #fff; }
.mdi svg { width: 10px; height: 10px; }

.tools { flex: none; display: flex; height: 33px; background: #ece9ef; border-top: 1px solid #fff; }
.tools.second { height: 32px; }
.group { display: flex; align-items: center; padding-left: 3px; border-right: 1px solid #a8a8b0; border-bottom: 1px solid #a8a8b0; margin-right: 1px; }
.group.last { flex: 1; }
.grip { width: 3px; height: 20px; margin-right: 3px; background: repeating-linear-gradient(#a8a8b0 0 1px, transparent 1px 2px); }
.tb { width: 32px; height: 28px; display: grid; place-items: center; }
.tb svg { width: 20px; height: 20px; }
.pressed { border: 1px solid #a0a0a8; border-radius: 4px; background: #fff; }
.cam { width: 36px; }
.tool { display: flex; align-items: center; gap: 4px; padding: 0 4px; }
.seltool { width: 17px; height: 18px; }
.wide { width: 21px; height: 20px; }
.help .caret { margin-left: 4px; }
.zoom { width: 49px; height: 21px; margin: 0 4px 0 0; padding: 0 5px; border: 1px solid #a0a0a8; background: #fff; }
.yahoo { gap: 0; }
.yahoo b { font: bold 17px/16px "Liberation Serif", serif; color: #e01020; }

.rbody { flex: 1; min-height: 0; display: flex; border-top: 2px solid #85858d; background: #ece9ef; }
.rtabs { width: 20px; padding: 5px 0 0 3px; background: #c5c4cb; border-right: 1px solid #85858d; display: flex; flex-direction: column; }
.rtabs button { position: relative; width: 16px; background: #50505c; clip-path: polygon(0 16px, 16px 0, 100% 0, 100% 100%, 0 100%); padding-top: 14px; display: grid; place-items: center; }
.rtabs button::before { content: ""; position: absolute; inset: 1px 0 2px 1px; background: #ece9ef; clip-path: polygon(0 16px, 16px 0, 100% 0, 100% 100%, 0 100%); }
.rtabs button::after { content: ""; position: absolute; right: 2px; bottom: 4px; width: 11px; height: 2px; background: repeating-linear-gradient(90deg, #888 0 2px, transparent 2px 3px); }
.rtabs span { position: relative; writing-mode: vertical-rl; transform: rotate(180deg); line-height: 14px; }
.t1 { height: 70px; font-weight: bold; }
.t2 { height: 95px; margin-top: 18px; }
.t3 { height: 111px; margin-top: -8px; }
.rsplit { width: 7px; border-right: 2px solid #85858d; background: repeating-linear-gradient(#888 0 1px, transparent 1px 3px) 2px 76% / 3px 20px no-repeat; }
.view { flex: 1; min-width: 0; display: grid; grid-template: minmax(0, 1fr) 17px / minmax(0, 1fr) 17px; }
.page { overflow: hidden; background: #fff; }
.sheet { width: 613px; padding-top: 20px; font: 13px/18px "Liberation Sans", Arial, sans-serif; color: #111; }
.f { display: flex; gap: 3px; }
.f span { width: 302px; text-align: right; white-space: nowrap; }
.f b { font-weight: normal; padding: 0 10px 0 5px; border-bottom: 1px solid #777; white-space: nowrap; }
.f.gap { margin-top: 9px; }
.sheet h3 { margin: 54px 0 20px; font-size: 16px; line-height: 20px; text-align: center; text-decoration: underline; text-decoration-thickness: 2px; }
.flyout { flex: none; height: 17px; display: grid; place-items: center; background: #ece9ef; }
.flyout svg { width: 6px; height: 8px; }
.viewfoot { display: flex; grid-column: 1; }
.viewfoot .hscroll { flex: 1; }
.sizer { width: 17px; display: grid; place-items: center; border-right: 1px solid #b0b0b8; }
.sizer svg { width: 10px; height: 8px; }
.dims { width: 122px; text-align: center; line-height: 17px; }

.rbar { flex: none; display: flex; height: 25px; background: #ece9ef; border-top: 1px solid #85858d; }
.seg { display: flex; align-items: center; border-right: 1px solid #a8a8b0; }
.nb { width: 32px; height: 22px; display: grid; place-items: center; }
.nb svg { width: 16px; height: 16px; }
.seg1 { width: 136px; padding-left: 3px; }
.seg2 { width: 206px; padding-left: 4px; }
.seg2 input { width: 68px; height: 21px; border: 1px solid #a0a0a8; background: #fff; text-align: center; padding: 0; }
.seg3 { width: 74px; padding-left: 5px; }
.seg4 { flex: 1; border-right: 0; padding-left: 5px; }
```
